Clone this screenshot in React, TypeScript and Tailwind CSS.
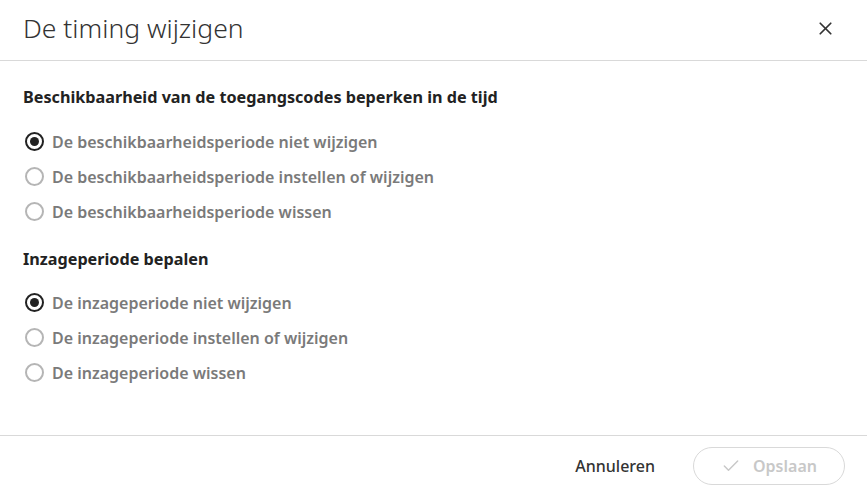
import { X, Check } from 'lucide-react'

const Radio = ({ label, checked }: { label: string; checked?: boolean }) => (
  <label className="flex items-center gap-2 h-[35px] cursor-pointer">
    <span className={`w-[19px] h-[19px] rounded-full border-2 flex items-center justify-center flex-shrink-0 ${checked ? 'border-[#222]' : 'border-[#b5b5b5]'}`}>
      {checked && <span className="w-[9px] h-[9px] rounded-full bg-[#222]" />}
    </span>
    <span className="text-base font-semibold text-[#7a7a7a]">{label}</span>
  </label>
)

export default function App() {
  const groups = [
    {
      title: 'Beschikbaarheid van de toegangscodes beperken in de tijd',
      options: [
        'De beschikbaarheidsperiode niet wijzigen',
        'De beschikbaarheidsperiode instellen of wijzigen',
        'De beschikbaarheidsperiode wissen',
      ],
    },
    {
      title: 'Inzageperiode bepalen',
      options: [
        'De inzageperiode niet wijzigen',
        'De inzageperiode instellen of wijzigen',
        'De inzageperiode wissen',
      ],
    },
  ]

  return (
    <div className="w-[867px] h-[495px] bg-white flex flex-col" style={{ fontFamily: '"Noto Sans", sans-serif' }}>
      {/* header */}
      <div className="h-[61px] flex items-center justify-between pl-[23px] pr-[31px] border-b border-[#d9d9d9]">
        <h1 className="text-[26.5px] font-light text-[#333] -mt-[2px]">De timing wijzigen</h1>
        <X className="w-[21px] h-[21px] text-[#333] -mt-[4px]" strokeWidth={2} />
      </div>

      {/* body */}
      <div className="flex-1 px-[23px] pt-[24px]">
        {groups.map((g, i) => (
          <div key={g.title} className={i > 0 ? 'mt-[18px]' : ''}>
            <h2 className="text-[16.2px] font-bold text-[#222] h-[24px] leading-[24px]">{g.title}</h2>
            <div className={`${i > 0 ? 'mt-[14px]' : 'mt-[15px]'} pl-[2px]`}>
              {g.options.map((o, j) => (
                <Radio key={o} label={o} checked={j === 0} />
              ))}
            </div>
          </div>
        ))}
      </div>

      {/* footer */}
      <div className="h-[60px] border-t border-[#d9d9d9] flex items-center justify-end gap-[38px] pr-[22px]">
        <button className="text-base font-medium text-[#333]">Annuleren</button>
        <button disabled className="w-[152px] h-[38px] rounded-full border border-[#d9d9d9] flex items-center justify-center gap-[12px] text-base font-semibold text-[#c8c8c8]">
          <Check className="w-[20px] h-[20px]" strokeWidth={1.75} />
          Opslaan
        </button>
      </div>
    </div>
  )
}
